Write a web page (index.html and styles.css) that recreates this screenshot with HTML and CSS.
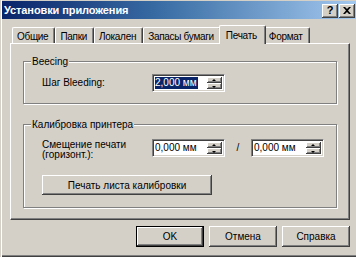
FILE: index.html
```html
<!DOCTYPE html>
<html lang="ru">
<head>
<meta charset="utf-8">
<title>Установки приложения</title>
<link rel="stylesheet" href="styles.css">
</head>
<body>
<div class="window">
  <div class="titlebar">
    <span class="title">Установки приложения</span>
    <div class="caption-btns">
      <span class="cbtn help">?</span>
      <span class="cbtn close">
        <svg width="8" height="7" viewBox="0 0 8 7"><path d="M0 0h2l2 2 2-2h2L5 3.5 8 7H6L4 5 2 7H0l3-3.5z" fill="#000"/></svg>
      </span>
    </div>
  </div>
  <div class="content">
    <div class="tabs">
      <span class="tab">Общие</span>
      <span class="tab">Папки</span>
      <span class="tab">Локален</span>
      <span class="tab">Запасы бумаги</span>
      <span class="tab active">Печать</span>
      <span class="tab">Формат</span>
    </div>
    <div class="panel">
      <fieldset class="group g1">
        <legend>Beecing</legend>
        <div class="row">
          <span class="label">Шаг Bleeding:</span>
          <div class="spin">
            <span class="value"><span class="sel">2,000 мм</span></span>
            <span class="arrows"><span class="arr up"></span><span class="arr down"></span></span>
          </div>
        </div>
      </fieldset>
      <fieldset class="group g2">
        <legend>Калибровка принтера</legend>
        <div class="row">
          <span class="label">Смещение печати<br>(горизонт.):</span>
          <div class="spin">
            <span class="value">0,000 мм</span>
            <span class="arrows"><span class="arr up"></span><span class="arr down"></span></span>
          </div>
          <span class="slash">/</span>
          <div class="spin">
            <span class="value">0,000 мм</span>
            <span class="arrows"><span class="arr up"></span><span class="arr down"></span></span>
          </div>
        </div>
        <button class="btn calib">Печать листа калибровки</button>
      </fieldset>
    </div>
    <div class="buttons">
      <button class="btn default">OK</button>
      <button class="btn">Отмена</button>
      <button class="btn">Справка</button>
    </div>
  </div>
</div>
</body>
</html>
```

FILE: styles.css
```css
html, body {
  margin: 0;
  padding: 0;
  overflow: hidden;
  background: #d4d0c8;
}

.window {
  box-sizing: border-box;
  width: 360px;
  height: 257px;
  padding: 1px 0 0 2px;
  background: #d4d0c8;
  font-family: "Liberation Sans", Arial, sans-serif;
  font-size: 10px;
  color: #000;
  box-shadow: inset 1px 0 0 #d4d0c8, inset 2px 0 0 #fff, inset 0 -1px 0 #404040, inset 0 -2px 0 #808080;
}

.titlebar {
  height: 18px;
  display: flex;
  align-items: center;
  justify-content: space-between;
  padding: 0 5px 0 2px;
  background: linear-gradient(to right, #0a246a 0%, #3a6ea5 45%, #a6caf0 100%);
}

.title {
  color: #fff;
  font-weight: bold;
  font-size: 11px;
  letter-spacing: -0.1px;
}

.caption-btns {
  display: flex;
  gap: 0;
  margin-top: 1px;
}

.cbtn {
  box-sizing: border-box;
  width: 16px;
  height: 14px;
  display: flex;
  align-items: center;
  justify-content: center;
  background: #d4d0c8;
  box-shadow: inset -1px -1px 0 #404040, inset 1px 1px 0 #fff, inset -2px -2px 0 #808080;
  font-weight: bold;
  font-size: 11px;
  line-height: 1;
}

.help {
  margin-right: 1px;
  padding-bottom: 1px;
}

.content {
  padding: 0 0 0 8px;
}

.tabs {
  height: 24px;
  display: flex;
  align-items: flex-end;
  padding-left: 2px;
}

.tab {
  box-sizing: border-box;
  height: 16px;
  padding: 2px 6px 0 4px;
  line-height: 13px;
  letter-spacing: -0.3px;
  white-space: nowrap;
  border-top: 1px solid #fff;
  border-left: 1px solid #fff;
  border-right: 1px solid #404040;
  box-shadow: inset -1px 0 0 #808080;
  border-radius: 2px 2px 0 0;
}

.tab.active {
  position: relative;
  z-index: 1;
  height: 19px;
  margin: 0 -2px -1px;
  padding: 3px 8px 0 6px;
  background: #d4d0c8;
}

.panel {
  box-sizing: border-box;
  width: 340px;
  height: 177px;
  padding: 11px 12px 0 12px;
  border-top: 1px solid #fff;
  border-left: 1px solid #fff;
  border-right: 1px solid #404040;
  border-bottom: 1px solid #404040;
  box-shadow: inset -1px -1px 0 #808080;
}

.group {
  margin: 0;
  padding: 0 0 0 18px;
  border: 1px solid #808080;
  box-shadow: 1px 1px 0 #fff, inset 1px 1px 0 #fff;
  min-inline-size: 0;
  width: 314px;
  box-sizing: border-box;
}

.group legend {
  padding: 0 1px;
  margin-left: -11px;
  line-height: 13px;
  background: #d4d0c8;
}

.g1 {
  height: 49px;
}

.g1 .row {
  margin-top: 6px;
}

.g2 {
  margin-top: 14px;
  height: 90px;
}

.g2 .row {
  margin-top: 8px;
}

.row {
  display: flex;
  align-items: flex-start;
}

.label {
  width: 110px;
  line-height: 10px;
  padding-top: 1px;
}

.g1 .label {
  padding-top: 4px;
}

.spin {
  box-sizing: border-box;
  width: 73px;
  height: 18px;
  display: flex;
  background: #fff;
  border-top: 1px solid #808080;
  border-left: 1px solid #808080;
  border-right: 1px solid #fff;
  border-bottom: 1px solid #fff;
  box-shadow: inset 1px 1px 0 #404040, inset -1px -1px 0 #d4d0c8;
  padding: 2px;
}

.value {
  flex: 1;
  line-height: 12px;
  white-space: nowrap;
}

.sel {
  display: inline-block;
  background: #0a246a;
  color: #fff;
  padding: 0 1px 0 0;
}

.arrows {
  display: flex;
  flex-direction: column;
  width: 15px;
}

.arr {
  flex: 1;
  position: relative;
  background: #d4d0c8;
  box-shadow: inset -1px -1px 0 #404040, inset 1px 1px 0 #fff, inset -2px -2px 0 #808080;
}

.arr::after {
  content: "";
  position: absolute;
  left: 5px;
  width: 0;
  height: 0;
  border-left: 2px solid transparent;
  border-right: 2px solid transparent;
}

.arr.up::after {
  top: 2px;
  border-bottom: 2px solid #000;
}

.arr.down::after {
  top: 3px;
  border-top: 2px solid #000;
}

.slash {
  width: 26px;
  text-align: center;
  line-height: 18px;
}

.btn {
  box-sizing: border-box;
  font-family: inherit;
  font-size: 10px;
  color: #000;
  background: #d4d0c8;
  border: none;
  border-radius: 0;
  padding: 0;
  box-shadow: inset -1px -1px 0 #404040, inset 1px 1px 0 #fff, inset -2px -2px 0 #808080;
}

.calib {
  display: block;
  width: 170px;
  height: 20px;
  margin-top: 15px;
}

.buttons {
  width: 340px;
  margin-top: 6px;
  display: flex;
  justify-content: flex-end;
  gap: 5px;
}

.buttons .btn {
  width: 68px;
  height: 21px;
}

.buttons .btn.default {
  box-shadow: inset 0 0 0 1px #000, inset -2px -2px 0 #404040, inset 2px 2px 0 #fff, inset -3px -3px 0 #808080;
}
```
